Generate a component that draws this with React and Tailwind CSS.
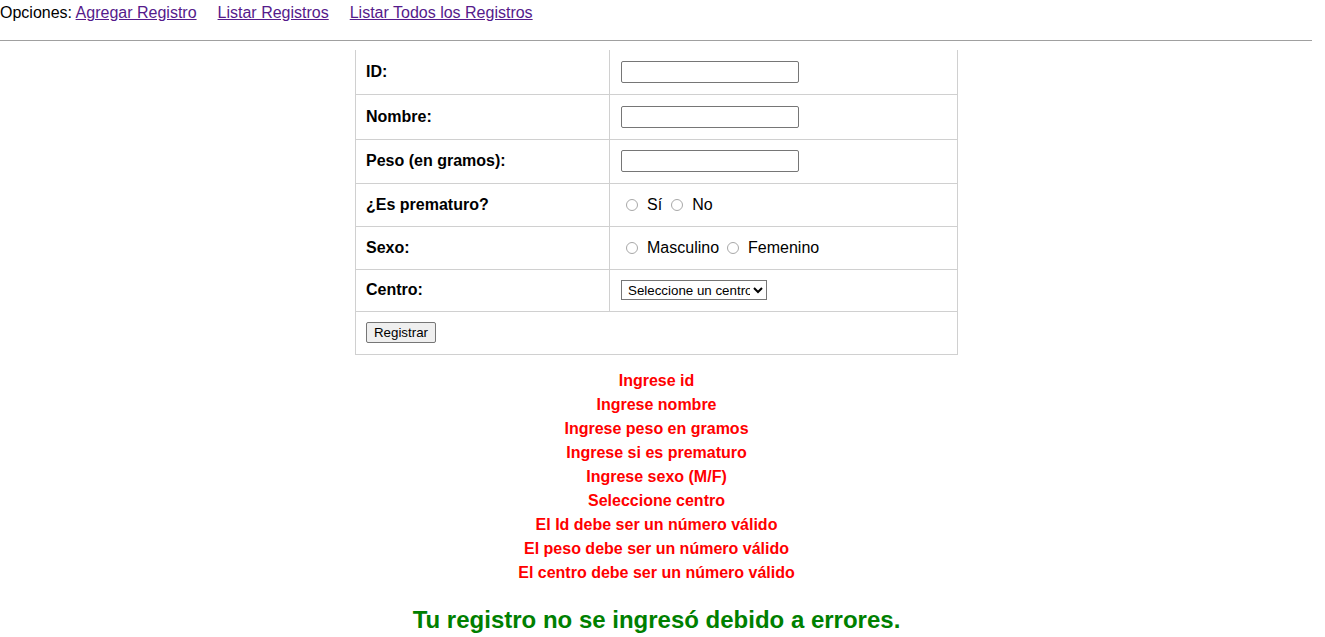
import React from "react";

const errors = [
  "Ingrese id",
  "Ingrese nombre",
  "Ingrese peso en gramos",
  "Ingrese si es prematuro",
  "Ingrese sexo (M/F)",
  "Seleccione centro",
  "El Id debe ser un número válido",
  "El peso debe ser un número válido",
  "El centro debe ser un número válido",
];

function TextInput() {
  return (
    <input
      type="text"
      className="w-[178px] h-[22px] border border-[#767676] rounded-[2px] bg-white px-[2px] text-[13.33px] align-middle"
    />
  );
}

function Radio({ name, label }) {
  return (
    <label className="inline-flex items-center">
      <input
        type="radio"
        name={name}
        className="appearance-none w-[12px] h-[12px] rounded-full border border-[#a8a8a8] bg-white ml-[5px] mr-[9px]"
      />
      <span>{label}</span>
    </label>
  );
}

export default function App() {
  const cellL = "border border-[#d0d0d0] border-t-0 pl-[10px] pr-[10px] font-bold align-middle w-[254px]";
  const cellR = "border border-[#d0d0d0] border-t-0 pl-[11px] pr-[10px] align-middle";
  return (
    <div className="w-[1313px] font-['Liberation_Sans',Arial,sans-serif] text-[16px] text-black bg-white">
      <div className="pt-[4px] h-[40px] leading-[18px] whitespace-nowrap">
        <span>Opciones: </span>
        <a href="#" className="text-[#551a8b] underline">Agregar Registro</a>
        <a href="#" className="text-[#551a8b] underline ml-[21px]">Listar Registros</a>
        <a href="#" className="text-[#551a8b] underline ml-[21px]">Listar Todos los Registros</a>
      </div>
      <div className="border-t border-[#a0a0a0] mr-[1px]" />
      <table className="mx-auto mt-[9px] w-[603px] border-collapse leading-[18px]">
        <tbody>
          <tr className="h-[44px]">
            <td className={cellL}>ID:</td>
            <td className={cellR}><TextInput /></td>
          </tr>
          <tr className="h-[45px]">
            <td className={cellL}>Nombre:</td>
            <td className={cellR}><TextInput /></td>
          </tr>
          <tr className="h-[44px]">
            <td className={cellL}>Peso (en gramos):</td>
            <td className={cellR}><TextInput /></td>
          </tr>
          <tr className="h-[43px]">
            <td className={cellL}>¿Es prematuro?</td>
            <td className={cellR}>
              <div className="flex items-center gap-[4px]">
                <Radio name="prem" label="Sí" />
                <Radio name="prem" label="No" />
              </div>
            </td>
          </tr>
          <tr className="h-[43px]">
            <td className={cellL}>Sexo:</td>
            <td className={cellR}>
              <div className="flex items-center gap-[3px]">
                <Radio name="sexo" label="Masculino" />
                <Radio name="sexo" label="Femenino" />
              </div>
            </td>
          </tr>
          <tr className="h-[42px]">
            <td className={cellL}>Centro:</td>
            <td className={cellR}>
              <select className="h-[20px] w-[146px] border border-[#767676] bg-white text-[13.33px] leading-[16px] pl-[2px]">
                <option>Seleccione un centro</option>
              </select>
            </td>
          </tr>
          <tr className="h-[43px]">
            <td colSpan={2} className="border border-[#d0d0d0] pl-[10px] align-middle">
              <button className="h-[21px] w-[70px] px-[6px] border border-[#767676] rounded-[2px] bg-[#efefef] text-[13.33px] leading-[15px]">
                Registrar
              </button>
            </td>
          </tr>
        </tbody>
      </table>
      <div className="mt-[14px] text-center font-bold text-[#ff0000] leading-[24px]">
        {errors.map((e) => (
          <div key={e}>{e}</div>
        ))}
      </div>
      <div className="mt-[21px] text-center font-bold text-[24px] leading-[28px] text-[#008000]">
        Tu registro no se ingresó debido a errores.
      </div>
    </div>
  );
}
